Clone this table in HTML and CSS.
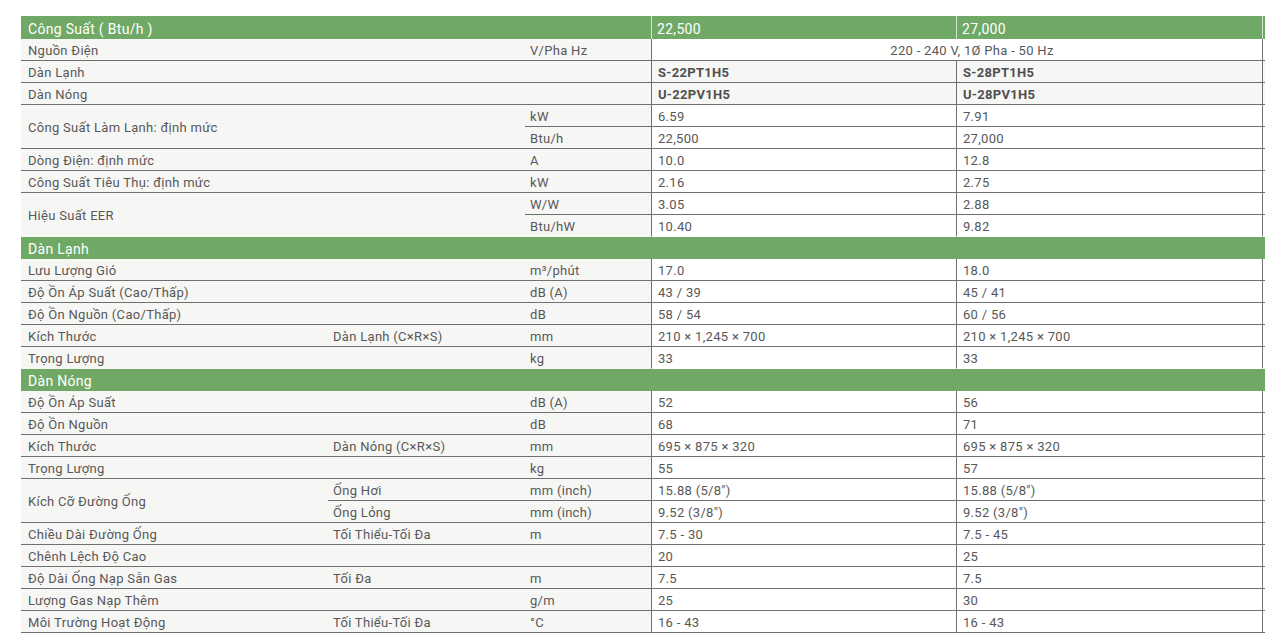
FILE: index.html
```html
<!DOCTYPE html>
<html lang="vi">
<head>
<meta charset="utf-8">
<title>Thông số kỹ thuật</title>
<link rel="stylesheet" href="styles.css">
</head>
<body>
<div class="spec">
  <div class="c hd span3">Công Suất ( Btu/h )</div>
  <div class="c hd v1">22,500</div>
  <div class="c hd v2">27,000</div>
  <div class="c hd v3"></div>

  <div class="c lb span2">Nguồn Điện</div>
  <div class="c un">V/Pha Hz</div>
  <div class="c val v1 span2 ctr">220 - 240 V, 1Ø Pha - 50 Hz</div>
  <div class="c val v3"></div>

  <div class="c lb span2 g">Dàn Lạnh</div>
  <div class="c un g"></div>
  <div class="c val v1 g b">S-22PT1H5</div>
  <div class="c val v2 g b">S-28PT1H5</div>
  <div class="c val v3 g"></div>

  <div class="c lb span2 g">Dàn Nóng</div>
  <div class="c un g"></div>
  <div class="c val v1 g b">U-22PV1H5</div>
  <div class="c val v2 g b">U-28PV1H5</div>
  <div class="c val v3 g"></div>

  <div class="c lb span2 rs2">Công Suất Làm Lạnh: định mức</div>
  <div class="c un">kW</div>
  <div class="c val v1">6.59</div>
  <div class="c val v2">7.91</div>
  <div class="c val v3"></div>
  <div class="c un">Btu/h</div>
  <div class="c val v1">22,500</div>
  <div class="c val v2">27,000</div>
  <div class="c val v3"></div>

  <div class="c lb span2">Dòng Điện: định mức</div>
  <div class="c un">A</div>
  <div class="c val v1">10.0</div>
  <div class="c val v2">12.8</div>
  <div class="c val v3"></div>

  <div class="c lb span2">Công Suất Tiêu Thụ: định mức</div>
  <div class="c un">kW</div>
  <div class="c val v1">2.16</div>
  <div class="c val v2">2.75</div>
  <div class="c val v3"></div>

  <div class="c lb span2 rs2 nb">Hiệu Suất EER</div>
  <div class="c un">W/W</div>
  <div class="c val v1">3.05</div>
  <div class="c val v2">2.88</div>
  <div class="c val v3"></div>
  <div class="c un nb">Btu/hW</div>
  <div class="c val v1 nb">10.40</div>
  <div class="c val v2 nb">9.82</div>
  <div class="c val v3 nb"></div>

  <div class="c sec">Dàn Lạnh</div>

  <div class="c lb span2">Lưu Lượng Gió</div>
  <div class="c un">m³/phút</div>
  <div class="c val v1">17.0</div>
  <div class="c val v2">18.0</div>
  <div class="c val v3"></div>

  <div class="c lb span2">Độ Ồn Áp Suất (Cao/Thấp)</div>
  <div class="c un">dB (A)</div>
  <div class="c val v1">43 / 39</div>
  <div class="c val v2">45 / 41</div>
  <div class="c val v3"></div>

  <div class="c lb span2">Độ Ồn Nguồn (Cao/Thấp)</div>
  <div class="c un">dB</div>
  <div class="c val v1">58 / 54</div>
  <div class="c val v2">60 / 56</div>
  <div class="c val v3"></div>

  <div class="c lb">Kích Thước</div>
  <div class="c sub">Dàn Lạnh (C×R×S)</div>
  <div class="c un">mm</div>
  <div class="c val v1">210 × 1,245 × 700</div>
  <div class="c val v2">210 × 1,245 × 700</div>
  <div class="c val v3"></div>

  <div class="c lb span2 nb">Trọng Lượng</div>
  <div class="c un nb">kg</div>
  <div class="c val v1 nb">33</div>
  <div class="c val v2 nb">33</div>
  <div class="c val v3 nb"></div>

  <div class="c sec">Dàn Nóng</div>

  <div class="c lb span2">Độ Ồn Áp Suất</div>
  <div class="c un">dB (A)</div>
  <div class="c val v1">52</div>
  <div class="c val v2">56</div>
  <div class="c val v3"></div>

  <div class="c lb span2">Độ Ồn Nguồn</div>
  <div class="c un">dB</div>
  <div class="c val v1">68</div>
  <div class="c val v2">71</div>
  <div class="c val v3"></div>

  <div class="c lb">Kích Thước</div>
  <div class="c sub">Dàn Nóng (C×R×S)</div>
  <div class="c un">mm</div>
  <div class="c val v1">695 × 875 × 320</div>
  <div class="c val v2">695 × 875 × 320</div>
  <div class="c val v3"></div>

  <div class="c lb span2">Trọng Lượng</div>
  <div class="c un">kg</div>
  <div class="c val v1">55</div>
  <div class="c val v2">57</div>
  <div class="c val v3"></div>

  <div class="c lb rs2">Kích Cỡ Đường Ống</div>
  <div class="c sub">Ống Hơi</div>
  <div class="c un">mm (inch)</div>
  <div class="c val v1">15.88 (5/8")</div>
  <div class="c val v2">15.88 (5/8")</div>
  <div class="c val v3"></div>
  <div class="c sub">Ống Lỏng</div>
  <div class="c un">mm (inch)</div>
  <div class="c val v1">9.52 (3/8")</div>
  <div class="c val v2">9.52 (3/8")</div>
  <div class="c val v3"></div>

  <div class="c lb">Chiều Dài Đường Ống</div>
  <div class="c sub">Tối Thiểu-Tối Đa</div>
  <div class="c un">m</div>
  <div class="c val v1">7.5 - 30</div>
  <div class="c val v2">7.5 - 45</div>
  <div class="c val v3"></div>

  <div class="c lb span2">Chênh Lệch Độ Cao</div>
  <div class="c un"></div>
  <div class="c val v1">20</div>
  <div class="c val v2">25</div>
  <div class="c val v3"></div>

  <div class="c lb">Độ Dài Ống Nạp Sẵn Gas</div>
  <div class="c sub">Tối Đa</div>
  <div class="c un">m</div>
  <div class="c val v1">7.5</div>
  <div class="c val v2">7.5</div>
  <div class="c val v3"></div>

  <div class="c lb span2">Lượng Gas Nạp Thêm</div>
  <div class="c un">g/m</div>
  <div class="c val v1">25</div>
  <div class="c val v2">30</div>
  <div class="c val v3"></div>

  <div class="c lb">Môi Trường Hoạt Động</div>
  <div class="c sub">Tối Thiểu-Tối Đa</div>
  <div class="c un">°C</div>
  <div class="c val v1">16 - 43</div>
  <div class="c val v2">16 - 43</div>
  <div class="c val v3"></div>
</div>
</body>
</html>
```

FILE: styles.css
```css
html, body {
  margin: 0;
  padding: 0;
  background: #ffffff;
  overflow: hidden;
}
body {
  padding: 16px 0 0 21px;
  font-family: Roboto, "Noto Sans", sans-serif;
  font-size: 13px;
  letter-spacing: 0.3px;
  color: #585858;
}
.spec {
  display: grid;
  grid-template-columns: 307px 197px 126px 305px 306px 40px;
  grid-template-rows: 23px;
  grid-auto-rows: 22px;
  width: 1281px;
}
.c {
  box-sizing: border-box;
  display: flex;
  align-items: center;
  padding-top: 2px;
  border-bottom: 1px solid #707070;
  background: #f6f6f4;
  white-space: nowrap;
  overflow: hidden;
}
.c.nb { border-bottom-color: transparent; }
.span2 { grid-column: span 2; }
.span3 { grid-column: span 3; }
.rs2 { grid-row: span 2; }

.hd {
  background: #70a966;
  color: #ffffff;
  font-size: 14px;
  border-bottom: none;
  padding-left: 7px;
}
.hd.v1, .hd.v2, .hd.v3 { border-left: 1px solid #d3e6cf; padding-left: 5px; }

.lb { padding-left: 7px; }
.sub { padding-left: 5px; }
.un { padding-left: 5px; }
.val { padding-left: 6px; background: #ffffff; }
.val.g { background: #f6f6f4; }
.v1, .v2, .v3 { border-left: 1px solid #707070; }
.b { font-weight: 700; color: #4f4f4f; }
.ctr { justify-content: center; padding-left: 30px; }

.sec {
  grid-column: 1 / -1;
  background: #70a966;
  color: #ffffff;
  font-size: 14px;
  border-bottom: none;
  padding-left: 7px;
}
```
